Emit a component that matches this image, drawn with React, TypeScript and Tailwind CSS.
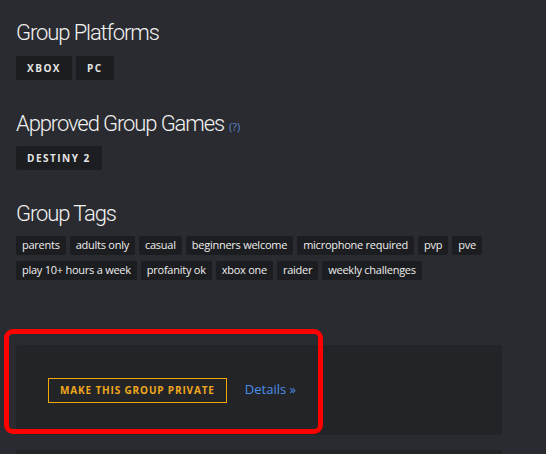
import React from "react";

const tagsRow = [
  "parents",
  "adults only",
  "casual",
  "beginners welcome",
  "microphone required",
  "pvp",
  "pve",
  "play 10+ hours a week",
  "profanity ok",
  "xbox one",
  "raider",
  "weekly challenges",
];

function Heading({ children }: { children: React.ReactNode }) {
  return (
    <h2
      className="text-[22px] leading-[26px] font-light text-[#f2f2f2] tracking-[-1.1px]"
      style={{ fontFamily: "Roboto, sans-serif" }}
    >
      {children}
    </h2>
  );
}

function CapsTag({ children }: { children: React.ReactNode }) {
  return (
    <span className="inline-flex items-center h-[24px] px-[11px] rounded-[2px] bg-[#1c1d20] text-[10px] font-bold tracking-[1.5px] text-[#e6e6e6]">
      {children}
    </span>
  );
}

export default function App() {
  return (
    <div
      className="w-[546px] h-[454px] bg-[#2a2b30] overflow-hidden"
      style={{ fontFamily: "'Open Sans', sans-serif" }}
    >
      <div className="pl-[16px] pt-[20px]">
        <Heading>Group Platforms</Heading>
        <div className="flex gap-[4px] mt-[10px]">
          <CapsTag>XBOX</CapsTag>
          <CapsTag>PC</CapsTag>
        </div>

        <div className="mt-[31px] flex items-baseline gap-[5px]">
          <Heading>Approved Group Games</Heading>
          <span className="text-[11px] text-[#5a82d0]">(?)</span>
        </div>
        <div className="flex mt-[9px]">
          <CapsTag>DESTINY 2</CapsTag>
        </div>

        <div className="mt-[31px]">
          <Heading>Group Tags</Heading>
        </div>
        <div className="flex flex-wrap gap-x-[4px] gap-y-[6px] mt-[9px] w-[480px]">
          {tagsRow.map((t) => (
            <span
              key={t}
              className="inline-flex items-center h-[19px] px-[6px] rounded-[2px] bg-[#1c1d20] text-[11px] tracking-[-0.25px] text-[#eeeeee]"
            >
              {t}
            </span>
          ))}
        </div>
      </div>

      <div className="relative mt-[65px] ml-[16px] w-[486px]">
        <div className="h-[90px] rounded-[3px] bg-[#232428] flex items-center pl-[32px] gap-[18px]">
          <button className="h-[25px] px-[11px] border border-[#f2a900] text-[#f0a81c] text-[10px] font-bold tracking-[0.85px]">
            MAKE THIS GROUP PRIVATE
          </button>
          <a className="text-[13px] text-[#4a8fe8]">Details »</a>
        </div>
        <div className="absolute left-[-12px] top-[-16px] w-[319px] h-[105px] rounded-[9px] border-[5px] border-[#ff0000]" />
        <div className="h-[80px] mt-[15px] rounded-[3px] bg-[#232428]" />
      </div>
    </div>
  );
}
